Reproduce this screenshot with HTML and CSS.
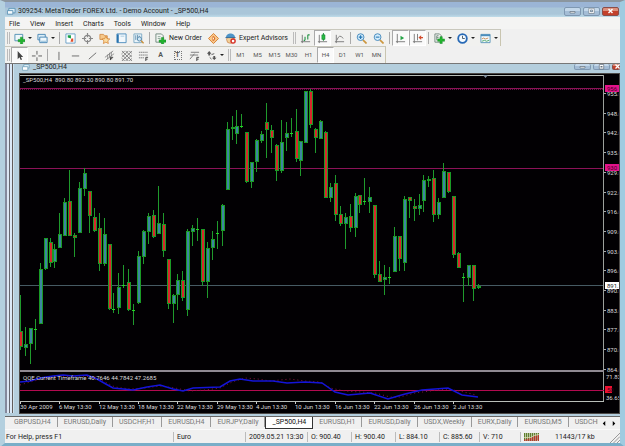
FILE: index.html
```html
<!DOCTYPE html>
<html lang="en">
<head>
<meta charset="utf-8">
<title>309254: MetaTrader FOREX Ltd. - Demo Account - _SP500,H4</title>
<link rel="stylesheet" href="styles.css">
</head>
<body>
<div class="window">
  <header class="titlebar">
    <svg class="app-icon" viewBox="0 0 10 9"><path d="M2 1h7v5H2z" fill="#d8ecf6" stroke="#5b93b5"/><path d="M.5 3.500h6v4h-6z" fill="#f4fafd" stroke="#5b93b5"/></svg>
    <h1>309254: MetaTrader FOREX Ltd. - Demo Account - _SP500,H4</h1>
    <div class="winbtns">
      <button aria-label="Minimize"><svg viewBox="0 0 8 6"><path d="M1.500 3.500h5v1.500h-5z" fill="#fff" stroke="#63707c" stroke-width=".7"/></svg></button>
      <button aria-label="Maximize"><svg viewBox="0 0 8 6"><path d="M2 .8h4v4H2z" fill="none" stroke="#fff" stroke-width="1.400"/><path d="M1.300.3h5.400v5.200H1.300zM3 2h2v1.800H3z" fill="none" stroke="#63707c" stroke-width=".6"/></svg></button>
      <button class="close" aria-label="Close"><svg viewBox="0 0 8 6"><path d="M2 1l4 4M6 1L2 5" stroke="#fff" stroke-width="1.400"/></svg></button>
    </div>
  </header>

  <nav class="menu">
    <button>File</button><button>View</button><button>Insert</button><button>Charts</button><button>Tools</button><button>Window</button><button>Help</button>
  </nav>

  <div class="toolbar main-tools">
    <span class="handle"></span>
    <button class="drop" aria-label="New chart"><svg viewBox="0 0 12 12"><path d="M1 1.500h8.500v7H1z" fill="#eef7fb" stroke="#4f8fb4"/><path d="M7 4.500h2.500V7H12v2.500H9.500V12H7V9.500H4.500V7H7z" fill="#22b42e" stroke="#0d8420" stroke-width=".5"/></svg><i></i></button>
    <button class="drop" aria-label="Profiles"><svg viewBox="0 0 12 12"><path d="M1 1.500h8v6H1z" fill="#dceef8" stroke="#4686b4"/><path d="M3 4.500h8v6H3z" fill="#eef7fc" stroke="#4686b4"/><path d="M4 9h6" stroke="#88b7d4"/></svg><i></i></button>
    <span class="sep"></span>
    <button aria-label="Market Watch"><svg viewBox="0 0 12 12"><path d="M1 1h10v10H1z" fill="#fff" stroke="#68a0c6"/><path d="M3 2.500h3.500V6L3 5z" fill="#17a047"/><path d="M9 6v3.500H6L7 6z" fill="#e0502d"/></svg></button>
    <button aria-label="Data Window"><svg viewBox="0 0 12 12"><circle cx="6" cy="6" r="3.500" fill="none" stroke="#888" stroke-width="1.300"/><path d="M6 0v4.500M6 7.500V12M0 6h4.500M7.500 6H12" stroke="#888" stroke-width="1.300"/></svg></button>
    <button aria-label="Navigator"><svg viewBox="0 0 12 12"><path d="M1 1.500h4l1 1.500h3v4H1z" fill="#f6c98b" stroke="#d4914d"/><path d="M7.500 3.500l1.300 2.700 3 .3-2.200 2 .6 3-2.700-1.500-2.700 1.500.6-3-2.200-2 3-.3z" fill="#fbdc9e" stroke="#d47f2e" stroke-width=".8"/></svg></button>
    <button aria-label="Terminal"><svg viewBox="0 0 12 12"><path d="M1 1h10v9.500H1z" fill="#f2f8fc" stroke="#4b8dbc"/><path d="M2 1.500v9" stroke="#2772ae" stroke-width="2"/><path d="M5 3.500h4" stroke="#a8c9df"/></svg></button>
    <button aria-label="Strategy Tester"><svg viewBox="0 0 12 12"><path d="M1 1h8.500v9.500H1z" fill="#e8f3f9" stroke="#7da9c4"/><path d="M3 2.500v5M5 2v4M7 3v2" stroke="#5f8fae"/><circle cx="7" cy="6.500" r="2.300" fill="#cfe7f6" stroke="#5286a8"/><path d="M8.800 8.300l2.700 3" stroke="#c98d33" stroke-width="1.500"/></svg></button>
    <span class="sep"></span>
    <button class="label order"><svg viewBox="0 0 12 12"><path d="M1 1h6l2 2v7H1z" fill="#f2f6f3" stroke="#70887c"/><path d="M3 4h3M3 6h3" stroke="#8aa497"/><path d="M7 5h2.500v2.500H12V10H9.500v2H7v-2H4.500V7.500H7z" fill="#22b42e" stroke="#0d8420" stroke-width=".5"/></svg>New Order</button>
    <button aria-label="MetaEditor"><svg viewBox="0 0 12 12"><path d="M6 .5L11.500 6 6 11.500.5 6z" fill="#f8c88c" stroke="#d67d2c"/><path d="M5 3.500v5h1.500L8 6 6.500 3.500z" fill="#d96a20"/><path d="M6 5v2" stroke="#fff"/></svg></button>
    <button class="label expert"><svg viewBox="0 0 12 12"><circle cx="6" cy="7" r="4.300" fill="#f2cf98" stroke="#b96b32" stroke-width=".6"/><path d="M1 5C1 2 4 .5 6 .5S11 2 11 5z" fill="#4d94c8"/><path d="M.5 5h11" stroke="#2d6694"/><circle cx="8.800" cy="8.800" r="3" fill="#d52b20"/><path d="M7.500 7.500h2.600v2.600H7.500z" fill="#fff"/></svg>Expert Advisors</button>
    <span class="handle"></span>
    <button aria-label="Bar chart"><svg viewBox="0 0 12 12"><path d="M2.500 2v9M1 9.500h10" stroke="#777" fill="none"/><path d="M5.500 8V4M8.500 7V2M8.500 2h2M4 8h1.500" stroke="#249447" stroke-width="1.200"/></svg></button>
    <button class="pressed" aria-label="Candlesticks"><svg viewBox="0 0 12 12"><path d="M2.500 2v9M1 9.500h10" stroke="#777" fill="none"/><path d="M7 0v8.500" stroke="#128232"/><path d="M5.300 2h3.400v5H5.300z" fill="#28ba42" stroke="#128232" stroke-width=".6"/></svg></button>
    <button aria-label="Line chart"><svg viewBox="0 0 12 12"><path d="M2.500 2v9M1 9.500h10M3 8q3-8 7-2" stroke="#777" fill="none"/></svg></button>
    <span class="sep"></span>
    <button aria-label="Zoom in"><svg viewBox="0 0 12 12"><path d="M7.500 7.500l4 4" stroke="#cc973f" stroke-width="1.800"/><circle cx="5" cy="4.500" r="3.700" fill="#d5edfb" stroke="#4287bb"/><path d="M3 4.500h4M5 2.500v4" stroke="#2878b5" stroke-width="1.200"/></svg></button>
    <button aria-label="Zoom out"><svg viewBox="0 0 12 12"><path d="M7.500 7.500l4 4" stroke="#cc973f" stroke-width="1.800"/><circle cx="5" cy="4.500" r="3.700" fill="#d5edfb" stroke="#4287bb"/><path d="M3 4.500h4" stroke="#2878b5" stroke-width="1.200"/></svg></button>
    <span class="sep"></span>
    <button class="pressed" aria-label="Auto scroll"><svg viewBox="0 0 12 12"><path d="M2.500 1v10M1 9.500h10" stroke="#777"/><path d="M6 3l4 2.500L6 8z" fill="#26a447"/></svg></button>
    <button class="pressed" aria-label="Chart shift"><svg viewBox="0 0 12 12"><path d="M2.500 1v10M1 9.500h10M6 1v7" stroke="#777"/><path d="M7 5l3-2.500v1.800h2v1.400h-2v1.800z" fill="#d34c2c"/></svg></button>
    <span class="sep"></span>
    <button class="drop" aria-label="Indicators"><svg viewBox="0 0 12 12"><path d="M1 1h5l2 2v7H1z" fill="#f2f4f2" stroke="#71887c"/><path d="M3 8V3h2M3 5h2" stroke="#71887c" fill="none"/><path d="M6.500 4H9v2.500h2.500V9H9v2.500H6.500V9H4V6.500h2.500z" fill="#22b42e" stroke="#0d8420" stroke-width=".5"/></svg><i></i></button>
    <button class="drop" aria-label="Periods"><svg viewBox="0 0 12 12"><circle cx="6" cy="6" r="4.700" fill="#f5fbff" stroke="#2769b6" stroke-width="2"/><path d="M6 3v3h2.500" stroke="#456" fill="none"/></svg><i></i></button>
    <button class="drop" aria-label="Templates"><svg viewBox="0 0 12 12"><path d="M1 1.500h10v9H1z" fill="#f4fafd" stroke="#5a94b9"/><path d="M1 2.500h10" stroke="#4b8dbc" stroke-width="2"/><path d="M2 6.500l2-1 2 1 3-1" stroke="#c98c57" fill="none"/><path d="M2 9l3-1 2 1 3-1" stroke="#4aa565" fill="none"/></svg><i></i></button>
  </div>

  <div class="toolbar line-tools">
    <span class="handle"></span>
    <button class="pressed" aria-label="Cursor"><svg viewBox="0 0 12 12"><path d="M4 1v9l2-2 1.300 3 1.500-.7L7.500 7.500H10z" fill="#444"/></svg></button>
    <button aria-label="Crosshair"><svg viewBox="0 0 12 12"><path d="M6.500 1v4M6.500 8v4M1 6.500h4M8 6.500h4" stroke="#555"/></svg></button>
    <span class="sep"></span>
    <button aria-label="Vertical line"><svg viewBox="0 0 12 12"><path d="M6.500 2v9" stroke="#666"/></svg></button>
    <button aria-label="Horizontal line"><svg viewBox="0 0 12 12"><path d="M2 6.500h8" stroke="#666"/></svg></button>
    <button aria-label="Trendline"><svg viewBox="0 0 12 12"><path d="M2 10l8-7" stroke="#666"/></svg></button>
    <button aria-label="Channel"><svg viewBox="0 0 12 12"><path d="M1 8l9-7M2 11l9-7M4 5v5M6 3v5M8 2v5" stroke="#777" stroke-width=".8"/><path d="M7 11V8h3M7 9.500h2" stroke="#333" fill="none"/></svg></button>
    <button aria-label="Gann grid"><svg viewBox="0 0 12 12"><path d="M1 4l3-3M1 8l7-7M1 12L12 1M5 12l7-7M9 12l3-3M1 9l3 3M1 5l7 7M1 1l11 11M5 1l7 7M9 1l3 3" stroke="#666" stroke-width=".8"/></svg></button>
    <button aria-label="Fibonacci"><svg viewBox="0 0 12 12"><path d="M1 2.500h10M1 5.500h10M1 8.500h6" stroke="#777" stroke-dasharray="1.500 .5"/><path d="M8.500 12V8H11M8.500 10h2" stroke="#444" fill="none"/></svg></button>
    <button aria-label="Text" class="letter">A</button>
    <button aria-label="Text label" class="letter"><span class="boxed">T</span></button>
    <button aria-label="Fibonacci fan"><svg viewBox="0 0 12 12"><path d="M2 2.500h9M1 5.500h9M1 10l5-6" stroke="#777"/><path d="M8.500 12V8H11M8.500 10h2" stroke="#444" fill="none"/></svg></button>
    <button class="drop" aria-label="Arrows"><svg viewBox="0 0 12 12"><path d="M3.500 1l2.500 3H4.500v2h-2V4H1zM9 11L6.500 8.500H8v-2h2v2h1.500z" fill="#555"/><path d="M4 8l2 2M6 5l3-1" stroke="#555"/></svg><i></i></button>
    <span class="handle"></span>
    <button>M1</button><button>M5</button><button>M15</button><button>M30</button><button>H1</button><button class="pressed">H4</button><button>D1</button><button>W1</button><button>MN</button>
  </div>

  <main class="mdi">
    <div class="edges"></div>
    <section class="chart-window">
      <header class="chart-title">
        <svg class="app-icon" viewBox="0 0 10 9"><path d="M2 0h6v4H2z" fill="#d8ecf6" stroke="#7aa7bf"/><path d="M.5 2.500h6v4h-6z" fill="#fff" stroke="#7aa7bf"/></svg>
        <h2>_SP500,H4</h2>
        <div class="winbtns">
          <button aria-label="Minimize chart"><svg viewBox="0 0 8 6"><path d="M1.500 2.500h5V4h-5z" fill="#fff" stroke="#63707c" stroke-width=".7"/></svg></button>
          <button aria-label="Maximize chart"><svg viewBox="0 0 8 6"><path d="M1.800.5h4.400v4.500H1.800z" fill="#fff" stroke="#63707c" stroke-width=".7"/><path d="M3 2h2v1.500H3z" fill="#63707c"/></svg></button>
          <button class="close" aria-label="Close chart"><svg viewBox="0 0 8 6"><path d="M2 .5l4 4M6 .5l-4 4" stroke="#fff" stroke-width="1.200"/></svg></button>
        </div>
      </header>
      <svg class="chart" id="chart" viewBox="20 74 599 339" role="img" aria-label="SP500 four hour chart"></svg>
    </section>
  </main>

  <nav class="tabs">
    <a href="#">GBPUSD,H4</a><a href="#">EURUSD,Daily</a><a href="#">USDCHF,H1</a><a href="#">EURUSD,H4</a><a href="#">EURJPY,Daily</a><a href="#" class="active">_SP500,H4</a><a href="#">EURUSD,H1</a><a href="#">EURUSD,Daily</a><a href="#">USDX,Weekly</a><a href="#">EURX,Daily</a><a href="#">EURUSD,M5</a><a href="#" class="cut">USDCHF,</a>
    <div class="scroll"><button aria-label="Scroll left"><svg viewBox="0 0 4 6"><path d="M3.500 0v6L.5 3z"/></svg></button><button aria-label="Scroll right"><svg viewBox="0 0 4 6"><path d="M.5 0v6l3-3z"/></svg></button></div>
  </nav>

  <footer class="status">
    <span>For Help, press F1</span><span>Euro</span><span>2009.05.21 13:30</span><span>O: 900.40</span><span>H: 900.40</span><span>L: 884.10</span><span>C: 885.60</span><span>V: 710</span>
    <span class="traffic"><svg viewBox="0 0 15 8"><path d="M.5 0v8M2.500 0v8M4.500 0v8M6.500 0v8M8.500 0v8M10.500 0v8M12.500 0v8M14.500 0v8" stroke="#5f7f2c" stroke-width="1.400"/><path d="M.5 8V6.500M2.500 8V6M4.500 8V5.500M6.500 8V5M8.500 8V4M10.500 8V3M12.500 8V2.500M14.500 8V2" stroke="#b4392b" stroke-width="1.400"/><path d="M0 4.500h7l3-2 5-1" stroke="#e6e0b8" fill="none" stroke-width=".7"/></svg>11443/17 kb</span>
    <svg class="grip" viewBox="0 0 10 10"><path d="M0 10L10 0M3.500 10L10 3.500M7 10l3-3" stroke="#999"/></svg>
  </footer>
</div>
<script src="chart.js"></script>
</body>
</html>
```
FILE: styles.css
```css
* { box-sizing: border-box; }
body {
  margin: 0;
  font: 7px/10px Roboto, "Liberation Sans", sans-serif;
  color: #222;
  background: #f0f0f0;
}
h1, h2 { margin: 0; font: inherit; white-space: nowrap; }
button {
  margin: 0; padding: 0; border: 0; background: none;
  font: inherit; color: inherit; white-space: nowrap;
}
svg { display: block; flex: none; }

.window {
  min-height: 100vh;
  display: flex;
  flex-direction: column;
  border-style: solid;
  border-width: 2px 5px 4px;
  border-color: #8b969f #9fcbe0 #79aec8 #b4d0df;
  background: #f0f0f0;
}

.titlebar {
  display: flex;
  align-items: center;
  height: 15px;
  padding: 3px 1px 0 2px;
  background: linear-gradient(#9bb5d6 0 5px, #aac6d9 6px 12px, #bfdce9);
}
.app-icon { width: 9px; height: 9px; margin-right: 2px; }
.titlebar h1 { flex: 1; }
.winbtns { display: flex; gap: 2px; }
.winbtns button {
  width: 17px; height: 9px;
  border: 1px solid #7f98b2;
  border-radius: 2px;
  background: linear-gradient(#c4d8ea 50%, #a4bdd6 50%);
  display: grid;
  place-items: center;
}
.winbtns svg { width: 9px; height: 6px; }
.winbtns .close { border-color: #8c4d48; background: linear-gradient(#dd8f7c 50%, #c2402b 50%); }

.menu {
  display: flex;
  gap: 10px;
  height: 12px;
  padding: 1px 4px 0;
  background: #f4f4f3;
}

.toolbar {
  display: flex;
  align-items: center;
  height: 17px;
  border-top: 1px solid #c9c8bd;
  border-right: 1px solid #c9c5b0;
  background: #f1f1ef;
}
.main-tools { align-self: flex-start; }
.line-tools { align-self: flex-start; color: #555; }
.toolbar svg { width: 11px; height: 11px; }
.toolbar button {
  width: 17px; height: 16px;
  display: flex; align-items: center; justify-content: center;
  font-size: 6px;
}
.toolbar .pressed {
  background: #fafafa;
  border: 1px solid #fff;
  border-top-color: #aaa;
  border-left-color: #aaa;
}
.toolbar .drop { width: 23px; gap: 3px; }
.drop i { border: 2px solid transparent; border-top-color: #222; border-bottom: 0; }
.toolbar .label { gap: 3px; font-size: 7px; }
.toolbar .order { width: 53px; }
.toolbar .expert { width: 69px; }
.handle { width: 3px; height: 12px; margin: 0 1px 0 2px; border: 1px solid #bbb; border-width: 0 1px; }
.sep { width: 1px; height: 12px; margin: 0 2px; background: #aaa; }
.toolbar .letter { font-size: 7px; font-weight: 700; }
.boxed { width: 8px; border: 1px dotted #777; line-height: 7px; }

.mdi {
  display: flex;
  flex: 1;
  border-top: 1px solid #777;
  background: #b4cedd;
}
.edges {
  width: 9px;
  margin-bottom: 3px;
  background: linear-gradient(90deg, #84899c 0 2px, #dce6f4 2px 4px, #66686f 4px 5px, #dbe9f8 5px 7px, #625c5b 7px 8px, #cfe3ef 8px);
}
.chart-window { flex: 1; min-width: 0; }
.chart-title {
  display: flex;
  height: 9px;
  padding: 0 0 0 8px;
  overflow: hidden;
  line-height: 6px;
}
.chart-title h2 { flex: 1; }
.chart-title button { height: 6px; border-top: 0; }
.chart-title .close { width: 8px; }
.chart {
  width: calc(100% - 7px);
  margin: 1px 1px 3px 6px;
  outline: 1px solid #4d4a48;
  background: #020003;
}
.chart text { font: 6px Roboto, "Liberation Sans", sans-serif; fill: #dcdcdc; }
.chart .alert { fill: #3d0021; }
.chart .now { fill: #222; }

.tabs {
  display: flex;
  height: 13px;
  padding-left: 3px;
  border-top: 1px solid #666;
  background: #f0f0f0;
}
.tabs a {
  padding: 0 6px;
  color: #777;
  text-decoration: none;
  white-space: nowrap;
}
.tabs a:not(.active) { border-right: 1px solid #999; height: 10px; }
.tabs .active { background: #fff; color: #111; border: 1px solid #333; border-top: 0; }
.tabs a.cut { flex: 1 1 0; min-width: 0; overflow: hidden; padding-right: 0; border: 0; }
.scroll { display: flex; align-items: center; gap: 6px; padding: 0 4px; }
.scroll svg { width: 4px; height: 5px; }

.status {
  display: grid;
  grid-template-columns: 168fr 72fr 62fr 44fr 44fr 44fr 40fr 41fr 90fr 10px;
  align-items: center;
  height: 14px;
  border-top: 1px solid #fafafa;
  background: #f0f0f0;
}
.status span { padding-left: 3px; border-left: 1px solid #bbb; white-space: nowrap; }
.status span:first-child { padding-left: 1px; border: 0; }
.status .traffic { display: flex; align-items: center; gap: 16px; }
.traffic svg { width: 15px; height: 8px; }
.grip { width: 10px; height: 10px; align-self: end; }
```
FILE: chart.js
```js
// Each candle: high, body top, body bottom, low, kind (u = up, d = down, j = doji)
const candles = `295 331 347 350 d|327 344 348 356 u|328 328 344 364 u|319 329 330 350 j|263 269 324 324 u|238 238 269 270 u|238 242 263 267 d|244 249 262 268 u|213 234 248 248 u|198 202 236 236 u|170 201 236 236 d|233 235 238 257 d|182 188 233 233 u|168 173 189 196 u|191 191 216 233 d|208 217 231 232 d|213 228 264 271 d|218 234 264 266 u|244 244 309 310 d|293 309 310 313 j|273 287 308 314 u|265 285 286 288 j|269 282 310 311 d|304 310 311 325 j|251 256 303 304 u|230 231 257 264 u|213 216 232 244 u|210 215 237 238 d|186 223 234 234 u|213 224 251 257 d|259 259 304 309 d|294 295 304 323 u|274 280 295 310 u|271 280 298 301 d|229 231 310 316 u|225 228 232 246 u|218 229 230 241 j|229 229 282 286 d|242 248 282 298 u|231 239 248 260 u|221 233 234 249 j|204 205 231 246 u|122 129 190 190 u|116 127 129 140 u|110 126 134 144 u|114 126 127 128 j|132 132 182 183 d|162 162 182 188 u|139 140 162 172 u|131 134 141 143 u|103 122 130 158 d|125 130 138 153 d|144 145 171 181 d|120 142 171 173 u|122 133 138 151 u|118 133 134 137 j|109 131 159 162 d|141 141 161 176 u|91 91 143 143 u|89 91 125 128 d|128 129 138 153 d|120 121 139 139 u|131 132 198 198 d|183 187 198 202 u|175 183 215 221 d|206 214 224 226 d|213 217 224 249 u|204 216 228 232 d|193 196 228 237 u|195 195 205 213 d|178 201 202 205 j|187 197 202 213 u|205 205 275 278 d|261 274 282 282 d|265 277 280 295 u|267 277 278 284 j|227 236 272 272 u|236 236 259 271 d|196 199 263 271 u|197 197 201 218 d|199 206 209 221 d|194 205 209 215 u|175 180 201 212 u|176 179 181 187 u|170 178 215 222 d|198 202 215 219 u|163 171 198 198 u|172 172 192 193 d|196 196 255 258 d|252 253 268 268 d|273 277 278 302 j|265 265 278 286 u|265 265 289 301 d|284 286 288 289 u`
  .split('|').map(row => row.split(' '));

const STEP = 4.92;
const parts = [];
const line = (x1, y1, x2, y2, color, extra = '') =>
  parts.push(`<path d="M${x1} ${y1}L${x2} ${y2}" stroke="${color}" ${extra}/>`);
const rect = (x, y, w, h, fill) =>
  parts.push(`<rect x="${x}" y="${y}" width="${w}" height="${h}" fill="${fill}"/>`);
const text = (x, y, label, cls = '') =>
  parts.push(`<text x="${x}" y="${y}" class="${cls}">${label}</text>`);

// Price levels
line(20, 88.5, 604, 88.5, '#8c1258');
line(20, 89.5, 604, 89.5, '#6a1044', 'stroke-dasharray="1 1"');
line(20, 168.5, 604, 168.5, '#8c1258');
line(20, 285.5, 604, 285.5, '#465a63');

// Candles
candles.forEach(([high, top, bottom, low, kind], i) => {
  const x = Math.round(20 + i * STEP);
  const fillOf = { u: '#3c86a0', d: '#d8282c' };
  rect(x, high, 1, low - high, '#1f9a2c');
  if (kind === 'j') {
    rect(x - 1, top, 3, 1, '#22d822');
  } else {
    rect(x - 1, top, 4, bottom - top, '#1a9a25');
    if (bottom - top > 2) rect(x, +top + 1, 2, bottom - top - 2, fillOf[kind]);
  }
});

// Frame, separator and scale
line(20, 75.5, 604, 75.5, '#b9beb9');
line(603.5, 75, 603.5, 402, '#9ca09c');
rect(20, 370, 584, 2, '#8f8992');
line(20, 401.5, 604, 401.5, '#b9beb9');
parts.push('<path d="M483 75h5l-2.500 3z" fill="#8795a5"/>');

['955.0', '948.0', '942.0', '935.0', '929.0', '922.0', '916.0', '909.0', '903.0', '896.0', '890.0', '883.0', '877.0', '870.0', '864.0']
  .forEach((label, i) => {
    const y = Math.round(93 + i * 19.7);
    line(604, y + .5, 606, y + .5, '#aaa');
    text(607, y + 3, label);
  });
text(606, 379, '71.82');
text(606, 400, '36.65');

const tag = (y, label, fill, cls, w = 14) => { rect(605, y, w, 7, fill); text(607, y + 6, label, cls); };
tag(85, '956', '#e3138b', 'alert');
tag(164, '930', '#e3138b', 'alert');
tag(282, '891.7', '#fff', 'now');

// Indicator pane
const curve = points => points.trim().split(' ').map((p, i) => (i ? 'L' : 'M') + p).join('');
line(20, 390.5, 604, 390.5, '#b30a50');
parts.push(`<path fill="none" stroke="#8a1541" stroke-width="1" stroke-dasharray="1 3" d="${curve('20,385 30,382 42,379 60,377 80,376 95,377 105,382 115,387 130,389 145,388 160,386 175,388 190,391 205,390 220,388 232,382 245,378 258,379 270,381 290,379 305,381 320,382 330,388 345,391 360,392 375,393 390,397 400,397 415,393 430,391 445,389 460,391 476,395')}"/>`);
parts.push(`<path fill="none" stroke="#1414d8" stroke-width="1.500" d="${curve('20,382 30,381 40,378 53,376 63,375 73,376 87,375 97,379 104,383 113,388 133,390 147,387 160,385 173,389 183,391 193,388 220,387 230,381 240,379 253,381 273,381 287,383 305,382 322,383 335,392 348,395 370,393 388,399 405,394 422,390 448,388 462,395 478,397')}"/>`);
tag(386, '50', '#ec1030', 'alert', 7);

text(23, 82, '_SP500,H4&#160; 890.80 892.30 890.80 891.70');
text(23, 380, 'QQE Current Timeframe 40.7646 44.7842 47.2685');

['30 Apr 2009', '6 May 13:30', '12 May 13:30', '18 May 13:30', '22 May 13:30', '29 May 13:30', '4 Jun 13:30', '10 Jun 13:30', '16 Jun 13:30', '22 Jun 13:30', '26 Jun 13:30', '2 Jul 13:30']
  .forEach((label, i) => {
    const x = Math.round(20 + i * 39.35);
    line(x + .5, 402, x + .5, 404, '#ccc');
    text(x, 409, label);
  });

document.getElementById('chart').innerHTML = parts.join('');
```
